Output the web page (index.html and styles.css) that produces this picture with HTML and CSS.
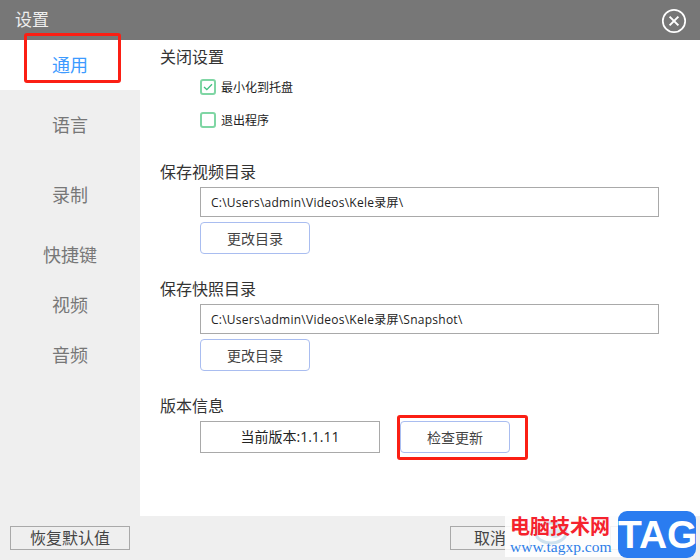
FILE: index.html
```html
<!DOCTYPE html>
<html lang="zh-CN">
<head>
<meta charset="utf-8">
<title>设置</title>
<link rel="stylesheet" href="styles.css">
</head>
<body>
<div class="app">
  <header class="titlebar">
    <span class="title">设置</span>
    <svg class="close" width="26" height="26" viewBox="0 0 26 26" fill="none" stroke="#fff">
      <circle cx="13" cy="13" r="11.2" stroke-width="1.7"/>
      <path d="M8.6 8.6 17.4 17.4M17.4 8.6 8.6 17.4" stroke-width="2"/>
    </svg>
  </header>
  <div class="body">
    <nav class="sidebar">
      <div class="nav-item active">通用</div>
      <div class="nav-item gap-10">语言</div>
      <div class="nav-item gap-20">录制</div>
      <div class="nav-item gap-10">快捷键</div>
      <div class="nav-item">视频</div>
      <div class="nav-item">音频</div>
    </nav>
    <main class="content">
      <section class="group group-close">
        <h2 class="heading">关闭设置</h2>
        <label class="check first">
          <span class="box">
            <svg width="10" height="8" viewBox="0 0 10 8" fill="none" stroke="#3fbf7f" stroke-width="1.3"><path d="M1 4 3.8 6.6 9 1.2"/></svg>
          </span>
          <span class="check-text">最小化到托盘</span>
        </label>
        <label class="check second"><span class="box"></span><span class="check-text">退出程序</span></label>
      </section>
      <section class="group group-video">
        <h2 class="heading">保存视频目录</h2>
        <div class="path">C:\Users\admin\Videos\Kele录屏\</div>
        <button class="btn">更改目录</button>
      </section>
      <section class="group group-snap">
        <h2 class="heading">保存快照目录</h2>
        <div class="path">C:\Users\admin\Videos\Kele录屏\Snapshot\</div>
        <button class="btn">更改目录</button>
      </section>
      <section class="group group-version">
        <h2 class="heading">版本信息</h2>
        <div class="version-row">
          <div class="version">当前版本:1.1.11</div>
          <button class="btn btn-flat">检查更新</button>
        </div>
      </section>
    </main>
  </div>
  <footer class="footer">
    <button class="foot-btn wide">恢复默认值</button>
    <div class="foot-right">
      <button class="foot-btn">取消</button>
      <button class="foot-btn">保存</button>
    </div>
  </footer>
</div>
<div class="mark mark-nav"></div>
<div class="mark mark-update"></div>
<div class="wm">
  <svg class="wm-swirl" width="46" height="30" viewBox="0 0 46 30" fill="none">
    <ellipse cx="20" cy="15" rx="15" ry="10" stroke="#cfe2ee" stroke-width="3"/>
    <ellipse cx="24" cy="15" rx="7" ry="5" fill="#dbe9f1"/>
  </svg>
  <div class="wm-title">电脑技术网</div>
  <div class="wm-url">www.tagxp.com</div>
</div>
<div class="wm-tag">TAG</div>
</body>
</html>
```
FILE: styles.css
```css
* { box-sizing: border-box; }
html, body { margin: 0; padding: 0; }
body {
  width: 700px;
  height: 560px;
  position: relative;
  overflow: hidden;
  font-family: "Open Sans", "Noto Sans CJK SC", sans-serif;
  color: #333;
}
.app { width: 700px; height: 560px; display: flex; flex-direction: column; background: #efefef; }
.titlebar {
  height: 40px;
  flex: none;
  background: #777;
  display: flex;
  align-items: center;
  justify-content: space-between;
  padding: 0 13px 0 15px;
}
.title { font-size: 17px; color: #eee; line-height: 42px; }
.close { display: block; margin-top: 1px; }
.body { flex: 1; display: flex; min-height: 0; }
.sidebar { width: 140px; flex: none; }
.nav-item {
  height: 50px;
  line-height: 51px;
  text-align: center;
  font-size: 18px;
  color: #777;
}
.nav-item.active { background: #fff; color: #3d9bff; }
.nav-item.gap-10 { margin-top: 10px; }
.nav-item.gap-20 { margin-top: 20px; }
.content { flex: 1; background: #fff; padding-left: 20px; }
.heading { margin: 0; padding-top: 1px; font-size: 16px; font-weight: 400; line-height: 24px; color: #333; }
.group-close { padding-top: 4px; }
.group-video { margin-top: 31px; }
.group-snap { margin-top: 22px; }
.group-version { margin-top: 22px; }
.check {
  display: flex;
  align-items: center;
  gap: 5px;
  margin-left: 40px;
  height: 16px;
  font-size: 12px;
  line-height: 16px;
  color: #222;
}
.check.first { margin-top: 10px; }
.check.second { margin-top: 17px; }
.check-text { margin-top: 2px; }
.box {
  width: 16px;
  height: 16px;
  flex: none;
  border: 2px solid #7fd6a4;
  border-radius: 3px;
  display: flex;
  align-items: center;
  justify-content: center;
}
.path {
  margin: 3px 0 0 40px;
  width: 459px;
  height: 30px;
  border: 1px solid #a9a9a9;
  padding-left: 10px;
  font-size: 12px;
  line-height: 29px;
  letter-spacing: .25px;
  color: #222;
}
.btn {
  display: block;
  margin: 5px 0 0 40px;
  width: 110px;
  height: 32px;
  padding: 0;
  background: #fff;
  border: 1px solid #a9bdf0;
  border-radius: 4px;
  font: inherit;
  font-size: 14px;
  color: #444;
}
.version-row { display: flex; gap: 20px; margin: 3px 0 0 40px; }
.version {
  width: 180px;
  height: 32px;
  border: 1px solid #a9a9a9;
  text-align: center;
  font-size: 14px;
  line-height: 30px;
  color: #222;
}
.btn-flat { margin: 0; }
.footer {
  height: 44px;
  flex: none;
  display: flex;
  justify-content: space-between;
  padding: 10px 10px 0;
}
.foot-right { display: flex; gap: 80px; }
.foot-btn {
  width: 80px;
  height: 24px;
  padding: 0;
  background: #efefef;
  border: 1px solid #a9a9a9;
  font: inherit;
  font-size: 16px;
  line-height: 22px;
  color: #444;
}
.foot-btn.wide { width: 120px; }
.mark { position: absolute; border: 3px solid #fb1f14; border-radius: 3px; }
.mark-nav { left: 24px; top: 33px; width: 97px; height: 50px; }
.mark-update { left: 397px; top: 415px; width: 131px; height: 45px; }
.wm {
  position: absolute;
  left: 505px;
  top: 516px;
  width: 120px;
  height: 41px;
  background: rgba(255, 255, 255, .86);
}
.wm-swirl { position: absolute; left: 26px; top: 2px; }
.wm-title {
  position: absolute;
  left: 5px;
  top: -3px;
  font-family: "Noto Sans CJK SC", sans-serif;
  font-size: 20px;
  line-height: 26px;
  font-weight: 700;
  color: #f5222d;
  white-space: nowrap;
}
.wm-url {
  position: absolute;
  left: 5px;
  top: 22px;
  font-family: "Liberation Serif", serif;
  font-size: 15.5px;
  line-height: 18px;
  color: #2f7fe8;
  white-space: nowrap;
}
.wm-tag {
  position: absolute;
  left: 618px;
  top: 511px;
  width: 78px;
  height: 47px;
  border-radius: 9px;
  background: #2a7cf0;
  color: #fff;
  font-family: "Liberation Sans", sans-serif;
  font-size: 39px;
  font-weight: 700;
  line-height: 47px;
  text-align: center;
}
```
